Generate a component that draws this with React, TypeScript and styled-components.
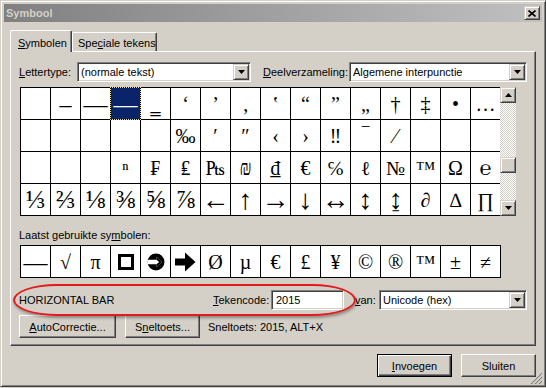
import React from "react";
import styled, { createGlobalStyle, css } from "styled-components";

const face = "#d4d0c8";
const shadow = "#808080";
const dark = "#404040";

const GlobalStyle = createGlobalStyle`
  html, body {
    margin: 0;
    padding: 0;
    background: ${face};
  }
  body {
    font-family: "Liberation Sans", Arial, sans-serif;
    font-size: 11px;
    color: #000;
  }
`;

const raised = css`
  border: 1px solid;
  border-color: ${face} ${dark} ${dark} ${face};
  box-shadow: inset 1px 1px #fff, inset -1px -1px ${shadow};
`;

const sunken = css`
  border: 1px solid;
  border-color: ${shadow} #fff #fff ${shadow};
  box-shadow: inset 1px 1px ${dark}, inset -1px -1px ${face};
`;

const Window = styled.div`
  position: relative;
  box-sizing: border-box;
  width: 546px;
  height: 387px;
  padding: 3px;
  background: ${face};
  border: 1px solid;
  border-color: ${face} ${dark} ${dark} ${face};
  box-shadow: inset 1px 1px #fff, inset -1px -1px ${shadow};
  display: flex;
  flex-direction: column;
`;

const TitleBar = styled.div`
  height: 18px;
  display: flex;
  align-items: center;
  justify-content: space-between;
  padding: 0 2px 0 2px;
  background: linear-gradient(to right, #808080, #c0c0c0);
`;

const Title = styled.span`
  font-weight: bold;
  color: ${face};
`;

const CloseButton = styled.div`
  box-sizing: border-box;
  width: 16px;
  height: 14px;
  background: ${face};
  ${raised};
  display: flex;
  align-items: center;
  justify-content: center;
`;

const Body = styled.div`
  flex: 1;
  display: flex;
  flex-direction: column;
  padding: 8px 6px 0 6px;
`;

const TabStrip = styled.div`
  height: 21px;
  display: flex;
  align-items: flex-end;
`;

const Tab = styled.div<{ $active?: boolean; $w: number; $pad: number }>`
  position: relative;
  z-index: ${(p) => (p.$active ? 2 : 1)};
  box-sizing: border-box;
  width: ${(p) => p.$w}px;
  height: ${(p) => (p.$active ? 22 : 19)}px;
  margin-bottom: ${(p) => (p.$active ? -1 : 0)}px;
  padding-left: ${(p) => p.$pad}px;
  padding-top: ${(p) => (p.$active ? 2 : 1)}px;
  background: ${face};
  border: 1px solid #fff;
  border-right-color: ${dark};
  border-bottom: none;
  border-radius: 2px 2px 0 0;
  box-shadow: inset -1px 0 ${shadow};
  display: flex;
  align-items: center;
  white-space: nowrap;
`;

const Panel = styled.div`
  box-sizing: border-box;
  height: 295px;
  padding: 10px 8px 0 8px;
  border: 1px solid;
  border-color: #fff ${dark} ${dark} #fff;
  box-shadow: inset -1px -1px ${shadow};
  display: flex;
  flex-direction: column;
`;

const FieldRow = styled.div<{ $top?: number }>`
  display: flex;
  align-items: center;
  height: 20px;
  margin-top: ${(p) => p.$top ?? 0}px;
`;

const Label = styled.span<{ $w?: number }>`
  white-space: nowrap;
  ${(p) => p.$w && css`width: ${p.$w}px; flex: none;`}
`;

const Combo = styled.div<{ $w?: number }>`
  box-sizing: border-box;
  height: 20px;
  ${(p) => (p.$w ? css`width: ${p.$w}px;` : css`flex: 1;`)}
  padding: 1px;
  background: #fff;
  ${sunken};
  display: flex;
  align-items: center;
`;

const ComboText = styled.span`
  flex: 1;
  padding-left: 2px;
  white-space: nowrap;
`;

const ArrowButton = styled.div`
  box-sizing: border-box;
  width: 16px;
  height: 16px;
  flex: none;
  background: ${face};
  ${raised};
  display: flex;
  align-items: center;
  justify-content: center;
`;

const TextBox = styled.div<{ $w: number }>`
  box-sizing: border-box;
  width: ${(p) => p.$w}px;
  height: 20px;
  padding-left: 4px;
  background: #fff;
  ${sunken};
  display: flex;
  align-items: center;
`;

const GridRow = styled.div`
  display: flex;
  margin: 5px 0 0 1px;
`;

const SymbolGrid = styled.div<{ $closed?: boolean }>`
  display: grid;
  grid-template-columns: repeat(16, 29px);
  grid-auto-rows: 31px;
  gap: 1px;
  width: fit-content;
  background: #000;
  padding: ${(p) => (p.$closed ? "1px" : "1px 0 1px 1px")};
`;

const Cell = styled.div<{ $selected?: boolean; $size?: number }>`
  position: relative;
  display: flex;
  align-items: center;
  justify-content: center;
  overflow: hidden;
  background: ${(p) => (p.$selected ? "#0a246a" : "#fff")};
  color: ${(p) => (p.$selected ? "#fff" : "#000")};
  font-family: "Liberation Serif", "DejaVu Serif", serif;
  font-size: ${(p) => p.$size ?? 20}px;
  line-height: 1;
  ${(p) =>
    p.$selected &&
    css`
      z-index: 1;
      outline: 1px dotted #e8dc90;
    `}
`;

const ScrollBar = styled.div`
  width: 16px;
  display: flex;
  flex-direction: column;
  background-color: #fff;
  background-image: repeating-conic-gradient(${face} 0 25%, #fff 0 50%);
  background-size: 2px 2px;
`;

const ScrollTrack = styled.div`
  flex: 1;
  padding-top: 54px;
`;

const Thumb = styled.div`
  box-sizing: border-box;
  width: 16px;
  height: 16px;
  background: ${face};
  ${raised};
`;

const SectionLabel = styled.div`
  margin-top: 12px;
  line-height: 14px;
  white-space: nowrap;
`;

const RecentRow = styled.div`
  margin: 3px 0 0 1px;
`;

const ButtonRow = styled.div`
  display: flex;
  align-items: center;
  gap: 9px;
  margin-top: 5px;
`;

const PushButton = styled.div<{ $w: number; $default?: boolean }>`
  box-sizing: border-box;
  width: ${(p) => p.$w}px;
  height: 23px;
  flex: none;
  background: ${face};
  display: flex;
  align-items: center;
  justify-content: center;
  white-space: nowrap;
  border: 1px solid;
  ${(p) =>
    p.$default
      ? css`
          border-color: #000;
          box-shadow: inset 1px 1px #fff, inset -1px -1px ${dark}, inset -2px -2px ${shadow};
        `
      : css`
          border-color: #fff ${dark} ${dark} #fff;
          box-shadow: inset -1px -1px ${shadow};
        `}
`;

const ShortcutText = styled.span`
  margin-left: -1px;
  white-space: nowrap;
`;

const Footer = styled.div`
  display: flex;
  justify-content: flex-end;
  gap: 9px;
  margin-top: 8px;
`;

const SizeGrip = styled.svg`
  position: absolute;
  right: 3px;
  bottom: 2px;
`;

const Highlight = styled.div`
  position: absolute;
  left: 12px;
  top: 283px;
  width: 343px;
  height: 32px;
  box-sizing: border-box;
  border: 2px solid #e4191c;
  border-radius: 44px / 16px;
  box-shadow: 1px 2px 3px rgba(0, 0, 0, 0.35);
  pointer-events: none;
`;

const SquareGlyph = styled.span`
  box-sizing: border-box;
  width: 16px;
  height: 16px;
  border: 3px solid #000;
`;

const Triangle = ({ up }: { up?: boolean }) => (
  <svg width="7" height="4" viewBox="0 0 7 4">
    <polygon points={up ? "0,4 7,4 3.5,0" : "0,0 7,0 3.5,4"} fill="#000" />
  </svg>
);

const CircleArrow = () => (
  <svg width="18" height="18" viewBox="-9 -9 18 18">
    <circle r="8.5" fill="#000" />
    <path d="M-8.6 -2.2 H0.5 V-5.2 L6 0 L0.5 5.2 V2.2 H-8.6 Z" fill="#fff" />
    <path d="M0.5 -2.2 V-5.2 L6 0 L0.5 5.2 V2.2 L3.2 0 Z" fill="#000" />
  </svg>
);

const HeavyArrow = () => (
  <svg width="21" height="20" viewBox="0 0 21 20">
    <path d="M0 6.5 H10 V0.5 L20.5 10 L10 19.5 V13.5 H0 Z" fill="#000" />
  </svg>
);

const rows: string[][] = [
  ["", "–", "—", "―", "‗", "‘", "’", "‚", "‛", "“", "”", "„", "†", "‡", "•", "…"],
  ["", "", "", "", "", "‰", "′", "″", "‹", "›", "‼", "‾", "⁄", "", "", ""],
  ["", "", "", "ⁿ", "₣", "₤", "₧", "₪", "₫", "€", "℅", "ℓ", "№", "™", "Ω", "℮"],
  ["⅓", "⅔", "⅛", "⅜", "⅝", "⅞", "←", "↑", "→", "↓", "↔", "↕", "↨", "∂", "∆", "∏"],
];

const glyphSize = (ch: string): number => {
  if ("–—―".includes(ch)) return 24;
  if ("←↑→↓↔↕↨".includes(ch)) return 28;
  if ("⅓⅔⅛⅜⅝⅞".includes(ch)) return 26;
  return 20;
};

const recent: React.ReactNode[] = [
  "—", "√", "π", <SquareGlyph key="sq" />, <CircleArrow key="ca" />, <HeavyArrow key="ha" />,
  "Ø", "µ", "€", "£", "¥", "©", "®", "™", "±", "≠",
];

export default function App() {
  return (
    <>
      <GlobalStyle />
      <Window>
        <TitleBar>
          <Title>Symbool</Title>
          <CloseButton>
            <svg width="8" height="7" viewBox="0 0 8 7">
              <path d="M0.5 0.5 L7.5 6.5 M7.5 0.5 L0.5 6.5" stroke="#000" strokeWidth="1.6" />
            </svg>
          </CloseButton>
        </TitleBar>
        <Body>
          <TabStrip>
            <Tab $active $w={62} $pad={7}>
              <span><u>S</u>ymbolen</span>
            </Tab>
            <Tab $w={85} $pad={5}>
              <span>Spe<u>c</u>iale tekens</span>
            </Tab>
          </TabStrip>
          <Panel>
            <FieldRow>
              <Label $w={58}><u>L</u>ettertype:</Label>
              <Combo $w={174}>
                <ComboText>(normale tekst)</ComboText>
                <ArrowButton><Triangle /></ArrowButton>
              </Combo>
              <Label $w={86} style={{ marginLeft: 12 }}><u>D</u>eelverzameling:</Label>
              <Combo>
                <ComboText>Algemene interpunctie</ComboText>
                <ArrowButton><Triangle /></ArrowButton>
              </Combo>
            </FieldRow>

            <GridRow>
              <SymbolGrid>
                {rows.flatMap((row, r) =>
                  row.map((ch, c) => (
                    <Cell key={`${r}-${c}`} $selected={r === 0 && c === 3} $size={glyphSize(ch)}>
                      {ch}
                    </Cell>
                  ))
                )}
              </SymbolGrid>
              <ScrollBar>
                <ArrowButton><Triangle up /></ArrowButton>
                <ScrollTrack>
                  <Thumb />
                </ScrollTrack>
                <ArrowButton><Triangle /></ArrowButton>
              </ScrollBar>
            </GridRow>

            <SectionLabel>Laatst gebruikte sy<u>m</u>bolen:</SectionLabel>
            <RecentRow>
              <SymbolGrid $closed>
                {recent.map((ch, i) => (
                  <Cell key={i} $size={i === 0 ? 24 : 20}>{ch}</Cell>
                ))}
              </SymbolGrid>
            </RecentRow>

            <FieldRow $top={12}>
              <Label $w={194}>HORIZONTAL BAR</Label>
              <Label $w={58}><u>T</u>ekencode:</Label>
              <TextBox $w={73}>2015</TextBox>
              <Label $w={24} style={{ marginLeft: 11 }}><u>v</u>an:</Label>
              <Combo>
                <ComboText>Unicode (hex)</ComboText>
                <ArrowButton><Triangle /></ArrowButton>
              </Combo>
            </FieldRow>

            <ButtonRow>
              <PushButton $w={97}><span><u>A</u>utoCorrectie...</span></PushButton>
              <PushButton $w={75}><span>S<u>n</u>eltoets...</span></PushButton>
              <ShortcutText>Sneltoets: 2015, ALT+X</ShortcutText>
            </ButtonRow>
          </Panel>

          <Footer>
            <PushButton $w={75} $default><span><u>I</u>nvoegen</span></PushButton>
            <PushButton $w={75}>Sluiten</PushButton>
          </Footer>
        </Body>

        <SizeGrip width="12" height="12" viewBox="0 0 12 12">
          <path d="M11 1 L1 11 M11 5 L5 11 M11 9 L9 11" stroke="#fff" strokeWidth="1" />
          <path d="M12 1 L1 12 M12 5 L5 12 M12 9 L9 12" stroke={shadow} strokeWidth="1.2" />
        </SizeGrip>
        <Highlight />
      </Window>
    </>
  );
}
